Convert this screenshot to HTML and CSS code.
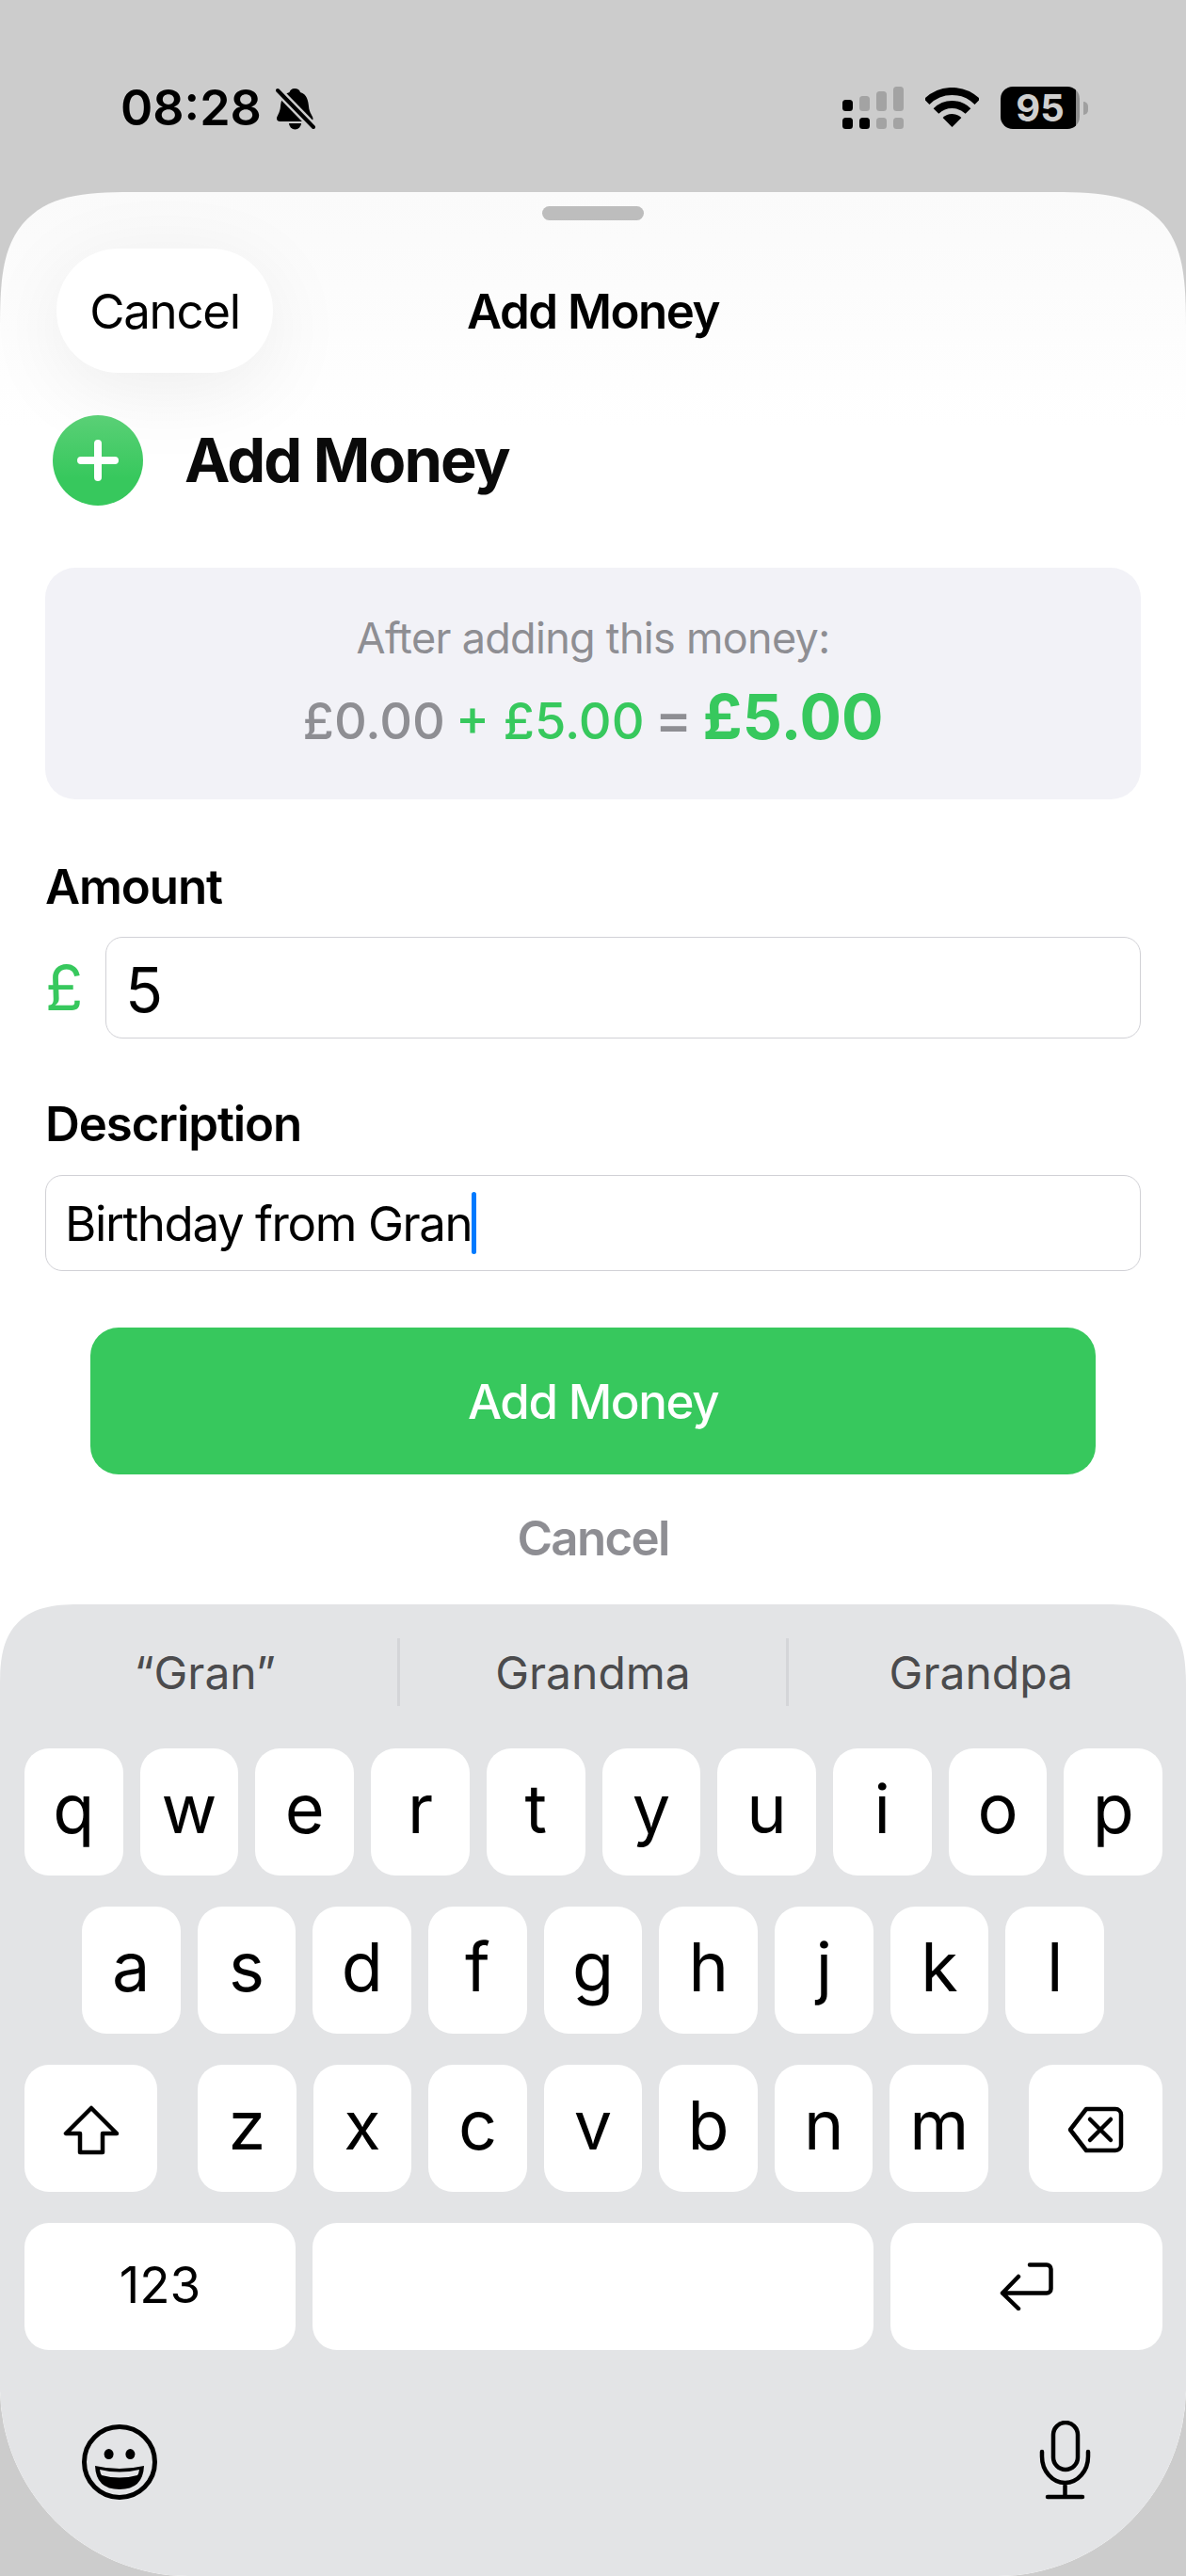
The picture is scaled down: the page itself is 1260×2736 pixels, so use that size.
FILE: index.html
```html
<!DOCTYPE html>
<html lang="en">
<head>
<meta charset="utf-8">
<title>Add Money</title>
<link rel="stylesheet" href="styles.css">
</head>
<body>
<div class="screen">
  <header class="status">
    <div class="status-left">
      <span class="time">08:28</span>
      <svg class="bell" width="42" height="46" viewBox="0 0 42 46">
        <path d="M20 1c-3 0-5 1.800-5.500 4C7.500 7 5.500 14 5 20 4.500 27 1 30 1 33c0 2 1.500 3 3.500 3H36c2 0 3.500-1 3.500-3 0-3-4-6-4.500-13-.5-6-2-13-9-15C25.500 2.500 23 1 20 1z"/>
        <path d="M14 38h13a6.500 6.500 0 0 1-13 0z"/>
        <path class="bell-gap" d="M1 2l40 41"/>
        <path class="bell-slash" d="M2 3l38 39"/>
      </svg>
    </div>
    <div class="status-right">
      <svg class="signal" width="65" height="45" viewBox="0 0 65 45">
        <rect x="0" y="14" width="11" height="12" rx="3.500"/>
        <rect class="dim" x="18" y="10" width="11" height="16" rx="3.500"/>
        <rect class="dim" x="36" y="5" width="11" height="21" rx="3.500"/>
        <rect class="dim" x="54" y="0" width="11" height="26" rx="3.500"/>
        <rect x="0" y="33" width="11" height="12" rx="3.500"/>
        <rect x="18" y="33" width="11" height="12" rx="3.500"/>
        <rect class="dim" x="36" y="33" width="11" height="12" rx="3.500"/>
        <rect class="dim" x="54" y="33" width="11" height="12" rx="3.500"/>
      </svg>
      <svg class="wifi" width="57" height="42" viewBox="0 0 57 42">
        <path class="wifi-arc" d="M1.600 15.100A38 38 0 0 1 55.400 15.100"/>
        <path class="wifi-arc" d="M11.500 25A24 24 0 0 1 45.500 25"/>
        <path d="M28.500 42L18.600 32.100A14 14 0 0 1 38.400 32.100Z"/>
      </svg>
      <div class="battery">
        <div class="battery-body"><span>95</span></div>
        <div class="battery-nub"></div>
      </div>
    </div>
  </header>

  <main class="sheet">
    <div class="grabber"></div>
    <nav class="nav">
      <button class="nav-cancel">Cancel</button>
      <div class="nav-title">Add Money</div>
      <div></div>
    </nav>

    <div class="heading">
      <div class="plus-badge">
        <svg width="44" height="44" viewBox="0 0 44 44"><path d="M22 4v36M4 22h36"/></svg>
      </div>
      <h1>Add Money</h1>
    </div>

    <section class="summary">
      <div class="summary-caption">After adding this money:</div>
      <div class="summary-line">
        <span class="grey">£0.00</span>
        <span class="green">+ £5.00</span>
        <span class="grey equals">=</span>
        <span class="total">£5.00</span>
      </div>
    </section>

    <div class="field amount-field">
      <div class="label">Amount</div>
      <div class="amount-row">
        <span class="pound">£</span>
        <div class="input input-amount">5</div>
      </div>
    </div>

    <div class="field desc-field">
      <div class="label">Description</div>
      <div class="input input-desc">Birthday from Gran<span class="caret"></span></div>
    </div>

    <button class="primary">Add Money</button>
    <button class="secondary">Cancel</button>

    <section class="keyboard">
      <div class="suggestions">
        <div class="suggestion">“Gran”</div>
        <div class="sep"></div>
        <div class="suggestion">Grandma</div>
        <div class="sep"></div>
        <div class="suggestion">Grandpa</div>
      </div>
      <div class="row">
        <div class="key">q</div><div class="key">w</div><div class="key">e</div><div class="key">r</div><div class="key">t</div><div class="key">y</div><div class="key">u</div><div class="key">i</div><div class="key">o</div><div class="key">p</div>
      </div>
      <div class="row row-home">
        <div class="key">a</div><div class="key">s</div><div class="key">d</div><div class="key">f</div><div class="key">g</div><div class="key">h</div><div class="key">j</div><div class="key">k</div><div class="key">l</div>
      </div>
      <div class="row">
        <div class="key key-shift">
          <svg class="icon" width="60" height="53" viewBox="0 0 60 53"><path d="M30 3L3 30H18V50H42V30H57Z"/></svg>
        </div>
        <div class="letters">
          <div class="key">z</div><div class="key">x</div><div class="key">c</div><div class="key">v</div><div class="key">b</div><div class="key">n</div><div class="key">m</div>
        </div>
        <div class="key key-delete">
          <svg class="icon" width="60" height="50" viewBox="0 0 60 50"><path d="M20 3H51a6 6 0 0 1 6 6V41a6 6 0 0 1-6 6H20L3 25Z"/><path d="M24 14L46 36M46 14L24 36"/></svg>
        </div>
      </div>
      <div class="row">
        <div class="key key-num">123</div>
        <div class="key key-space"></div>
        <div class="key key-return">
          <svg class="icon" width="57" height="51" viewBox="0 0 57 51"><path d="M32 2.500H50a4.500 4.500 0 0 1 4.500 4.500V28a4.500 4.500 0 0 1-4.500 4.500H3M20 15L3 32.500L20 49"/></svg>
        </div>
      </div>
      <div class="kb-bottom">
        <svg width="80" height="80" viewBox="0 0 80 80">
          <circle class="emoji-face" cx="40" cy="40" r="37.500"/>
          <ellipse cx="28.600" cy="31.600" rx="5" ry="5.500"/>
          <ellipse cx="51.400" cy="31.600" rx="5" ry="5.500"/>
          <path d="M14 44Q40 50 66 44Q65 69 40 69Q15 69 14 44Z"/>
          <path class="emoji-teeth" d="M19 48Q40 53 61 48Q60.500 52 59 54Q40 59 21 54Q19.500 52 19 48Z"/>
        </svg>
        <svg class="icon" width="55" height="84" viewBox="0 0 55 84">
          <rect x="15" y="2" width="26" height="50" rx="13"/>
          <path d="M3 33V38A24.500 28 0 0 0 52 38V33M27.500 66V81M9 81H46"/>
        </svg>
      </div>
    </section>
  </main>
</div>
</body>
</html>
```

FILE: styles.css
```css
* { box-sizing: border-box; }
html, body { margin: 0; padding: 0; }
body {
  font-family: Inter, "Liberation Sans", sans-serif;
  background: #cccccc;
  color: #000;
}
button { font-family: inherit; border: 0; padding: 0; }

.screen {
  width: 1260px;
  height: 2736px;
  display: flex;
  flex-direction: column;
  overflow: hidden;
}

/* status bar */
.status {
  height: 204px;
  flex: none;
  display: flex;
  justify-content: space-between;
  padding: 92px 104px 0 128px;
}
.status-left { display: flex; align-items: flex-start; gap: 15px; }
.time {
  font-size: 52px;
  font-weight: 600;
  line-height: 46px;
}
.bell { margin-top: 1px; }
.bell-gap { stroke: #ccc; stroke-width: 9; fill: none; }
.bell-slash { stroke: #000; stroke-width: 4; stroke-linecap: round; fill: none; }
.status-right { display: flex; align-items: flex-start; }
.signal .dim { fill: #a3a3a3; }
.wifi { margin: 1px 23px 0 23px; }
.wifi-arc { fill: none; stroke: #000; stroke-width: 8; }
.battery { display: flex; align-items: center; gap: 4px; height: 45px; }
.battery-body {
  width: 84px;
  height: 45px;
  border-radius: 13px;
  background: linear-gradient(90deg, #000 95%, #8e8e8e 95%);
  color: #cfcfcf;
  display: flex;
  align-items: center;
  justify-content: center;
  font-size: 40px;
  font-weight: 700;
  line-height: 1;
}
.battery-nub {
  width: 5px;
  height: 14px;
  border-radius: 0 5px 5px 0;
  background: #a0a0a0;
}

/* sheet */
.sheet {
  flex: 1;
  display: flex;
  flex-direction: column;
  background: linear-gradient(#fafafa, #ffffff 250px);
  border-radius: 125px 125px 200px 200px;
  overflow: hidden;
  min-height: 0;
}
@supports (corner-shape: superellipse(2)) {
  .sheet {
    border-radius: 150px 150px 200px 200px;
    corner-top-left-shape: superellipse(1.7);
    corner-top-right-shape: superellipse(1.7);
  }
  .keyboard {
    border-top-left-radius: 88px !important;
    border-top-right-radius: 88px !important;
    corner-top-left-shape: superellipse(1.5);
    corner-top-right-shape: superellipse(1.5);
  }
}
.grabber {
  width: 108px;
  height: 15px;
  margin: 15px auto 0;
  border-radius: 8px;
  background: #bdbdbd;
  flex: none;
}
.nav {
  flex: none;
  display: grid;
  grid-template-columns: 1fr auto 1fr;
  align-items: center;
  margin-top: 30px;
  padding: 0 60px;
}
.nav-cancel {
  width: 230px;
  height: 132px;
  border-radius: 66px;
  background: #fff;
  box-shadow: 0 18px 90px rgba(0, 0, 0, 0.07);
  font-size: 51px;
  font-weight: 400;
  letter-spacing: -1.3px;
  color: #000;
}
.nav-title { font-size: 51px; font-weight: 600; letter-spacing: -1.5px; }

.heading {
  flex: none;
  display: flex;
  align-items: center;
  gap: 44px;
  margin: 44px 0 0 56px;
  position: relative;
}
.plus-badge {
  width: 96px;
  height: 96px;
  border-radius: 50%;
  background: linear-gradient(#5ad076, #37c85d 70%);
  display: flex;
  align-items: center;
  justify-content: center;
}
.plus-badge path { stroke: #fff; stroke-width: 8; stroke-linecap: round; }
h1 {
  margin: 0;
  font-size: 65px;
  font-weight: 700;
  line-height: 98px;
  letter-spacing: -1.9px;
  color: #0a0a0a;
}

.summary {
  flex: none;
  height: 246px;
  margin: 65px 48px 0;
  border-radius: 32px;
  background: #f2f2f7;
  display: flex;
  flex-direction: column;
  align-items: center;
  padding-top: 48px;
}
.summary-caption { font-size: 45px; line-height: 54px; color: #8e8e93; letter-spacing: -0.7px; }
.summary-line {
  display: flex;
  align-items: baseline;
  gap: 11px;
  margin-top: 18px;
  font-size: 54px;
  line-height: 76px;
  font-weight: 500;
}
.grey { color: #8e8e93; }
.green { color: #37c85d; }
.equals { font-size: 60px; line-height: 60px; }
.total { color: #37c85d; font-size: 66px; font-weight: 700; }

.field { flex: none; margin: 0 48px; }
.amount-field { margin-top: 64px; }
.desc-field { margin-top: 62px; }
.label { font-size: 51px; font-weight: 600; line-height: 58px; letter-spacing: -1.1px; }
.amount-row { display: flex; align-items: center; gap: 24px; margin-top: 24px; }
.pound { color: #37c85d; font-size: 66px; line-height: 108px; width: 40px; flex: none; }
.input {
  flex: 1;
  border: 1.5px solid #d1d1d6;
  border-radius: 18px;
  background: #fff;
  display: flex;
  align-items: center;
}
.input-amount { height: 108px; padding: 3px 0 0 20px; font-size: 66px; }
.input-desc { height: 102px; margin-top: 25px; padding-left: 20px; font-size: 51px; letter-spacing: -1.4px; }
.caret {
  width: 5px;
  height: 66px;
  border-radius: 3px;
  background: #007aff;
}

.primary {
  flex: none;
  display: block;
  width: 1068px;
  height: 156px;
  margin: 60px auto 0;
  border-radius: 30px;
  background: #37c85d;
  color: #fff;
  font-size: 51px;
  font-weight: 500;
  letter-spacing: -1.4px;
}
.secondary {
  flex: none;
  background: none;
  margin: 37px auto 0;
  color: #8e8e93;
  font-size: 51px;
  font-weight: 600;
  line-height: 62px;
  letter-spacing: -1.7px;
}

/* keyboard */
.keyboard {
  position: relative;
  margin-top: auto;
  flex: none;
  background: #e3e4e6;
  border-radius: 80px 80px 200px 200px;
  padding: 36px 25px 81px 26px;
  display: flex;
  flex-direction: column;
  gap: 33px;
}
.suggestions {
  display: flex;
  align-items: center;
  margin: 0 -12px 12px -13px;
  height: 72px;
}
.suggestion {
  flex: 1;
  text-align: center;
  font-size: 48px;
  color: #4b4b4d;
}
.sep { width: 3px; height: 72px; background: #d4d5d8; flex: none; }
.row { display: flex; gap: 18px; }
.row-home { padding: 0 62px 0 61px; }
.letters { flex: 1; display: flex; gap: 18px; margin: 0 25px; }
.key {
  flex: 1;
  height: 135px;
  border-radius: 26px;
  background: #fff;
  display: flex;
  align-items: center;
  justify-content: center;
  font-size: 72px;
  font-weight: 400;
  line-height: 1;
  padding-bottom: 8px;
}
.key-shift { flex: none; width: 141px; padding: 3px 0 0; }
.key-delete { flex: none; width: 142px; padding: 3px 0 0; }
.key-num { flex: none; width: 288px; font-size: 53px; padding-bottom: 2px; }
.key-space { flex: none; width: 596px; }
.key-return { flex: none; width: 289px; padding-bottom: 0; }
.icon { fill: none; stroke: #000; stroke-width: 4.500; stroke-linejoin: round; stroke-linecap: round; }
.kb-bottom {
  display: flex;
  justify-content: space-between;
  align-items: flex-end;
  margin: 42px 76px 0 61px;
}
.emoji-face { fill: none; stroke: #000; stroke-width: 5; }
.emoji-teeth { fill: #e3e4e6; }
```
